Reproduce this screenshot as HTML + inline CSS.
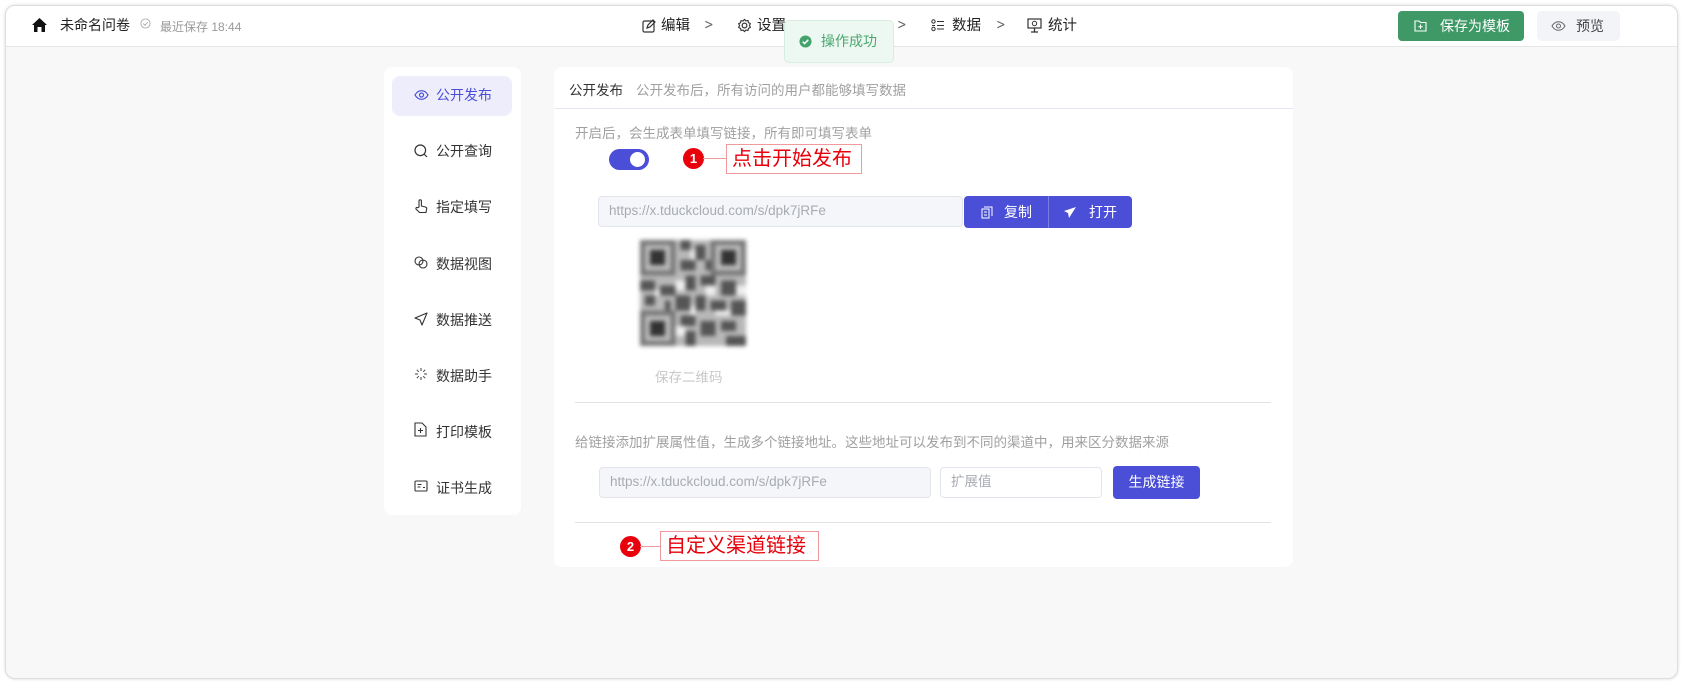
<!DOCTYPE html>
<html><head><meta charset="utf-8"><style>
*{box-sizing:border-box;margin:0;padding:0}
body{width:1683px;height:684px;background:#fff;font-family:"Liberation Sans","Noto Sans CJK SC",sans-serif;position:relative;overflow:hidden;color:#333}
.a{position:absolute}
#frame{left:5px;top:5px;width:1673px;height:674px;border:1px solid #dedede;border-radius:10px;background:#f8f8f8;overflow:hidden;box-shadow:0 0 3px rgba(0,0,0,.15)}
#hdr{left:0;top:0;width:100%;height:41px;background:#fff;border-bottom:1px solid #e6e6e6}
.t14{font-size:14px;line-height:16px}
.nav{font-size:14.5px;color:#222;line-height:16px;top:12px}
.chev{font-size:14px;color:#666;top:11px;font-family:"DejaVu Sans",sans-serif;transform:scaleX(.8)}
.card{background:#fff;border-radius:8px}
.item{font-size:14px;color:#333;line-height:16px}
.gray{color:#a0a0a0;font-size:13.5px;line-height:16px}
.inp{background:#f5f6fa;border:1px solid #e3e5ec;border-radius:4px;color:#a8abb3;font-size:13.5px;padding-left:10px;line-height:28px}
.red{color:#e8000b;font-size:20px;border:1px solid #f19a9e;background:#fff;line-height:28px;padding-left:5px}
.num{background:#e8000b;color:#fff;border-radius:50%;width:21px;height:21px;text-align:center;font-size:13px;font-weight:bold;line-height:21px}
</style></head><body>
<div id="frame" class="a">
<div id="hdr" class="a">
 <svg class="a" style="left:25px;top:11px" width="17" height="16" viewBox="0 0 17 16"><path d="M8.5 1 L16 8 L14 8 L14 15 L10.5 15 L10.5 10 L6.5 10 L6.5 15 L3 15 L3 8 L1 8 Z" fill="#111"/></svg>
 <div class="a t14" style="left:54px;top:11px;color:#222">未命名问卷</div>
 <svg class="a" style="left:134px;top:12px" width="11" height="11" viewBox="0 0 12 12"><circle cx="6" cy="6" r="5" fill="none" stroke="#aaa"/><path d="M3.5 6l2 2 3-3.5" fill="none" stroke="#aaa"/></svg>
 <div class="a" style="left:154px;top:12px;font-size:12px;color:#999">最近保存 18:44</div>
 <svg class="a" style="left:636px;top:13px" width="14" height="14" viewBox="0 0 14 14"><rect x="1" y="2" width="11" height="11" rx="1.5" fill="none" stroke="#333" stroke-width="1.2"/><path d="M5 9l1-3 5-5 2 2-5 5z" fill="none" stroke="#333" stroke-width="1.2"/></svg>
 <div class="a nav" style="left:655px">编辑</div><div class="a chev" style="left:697px">&gt;</div>
 <svg class="a" style="left:731px;top:12px" width="15" height="15" viewBox="0 0 16 16"><circle cx="8" cy="8" r="2.5" fill="none" stroke="#333" stroke-width="1.3"/><path d="M8 1.5l1.5 1.6 2.2-.4.5 2.2 2 1-.9 2.1.9 2.1-2 1-.5 2.2-2.2-.4L8 14.5 6.5 12.9l-2.2.4-.5-2.2-2-1 .9-2.1L1.8 6l2-1 .5-2.2 2.2.4z" fill="none" stroke="#333" stroke-width="1.2"/></svg>
 <div class="a nav" style="left:751px">设置</div>
 <div class="a chev" style="left:890px">&gt;</div>
 <svg class="a" style="left:925px;top:13px" width="14" height="13" viewBox="0 0 14 13"><circle cx="2.5" cy="2.5" r="1.7" fill="none" stroke="#333"/><circle cx="2.5" cy="10" r="1.7" fill="none" stroke="#333"/><path d="M6 2.5h7M6 6.5h7M6 10h7M1 6.5h3" stroke="#333" stroke-width="1.1"/></svg>
 <div class="a nav" style="left:946px">数据</div><div class="a chev" style="left:989px">&gt;</div>
 <svg class="a" style="left:1021px;top:12px" width="15" height="15" viewBox="0 0 15 15"><rect x="1" y="1" width="13" height="9" fill="none" stroke="#333" stroke-width="1.2"/><circle cx="7.5" cy="5.5" r="2.2" fill="none" stroke="#333"/><path d="M7.5 10v4M4 14h7" stroke="#333" stroke-width="1.3"/></svg>
 <div class="a nav" style="left:1042px">统计</div>
 <div class="a" style="left:1392px;top:5px;width:126px;height:30px;background:#3f9967;border-radius:4px;color:#fff;font-size:14px;line-height:30px">
  <svg class="a" style="left:16px;top:9px" width="13" height="12" viewBox="0 0 13 12"><path d="M1 1h4l1.5 1.5H12V11H1z" fill="none" stroke="#fff" stroke-width="1.1"/><path d="M6.5 4.5v4.5M4.3 6.8h4.4" stroke="#fff"/></svg>
  <span class="a" style="left:42px">保存为模板</span></div>
 <div class="a" style="left:1531px;top:5px;width:83px;height:30px;background:#f3f4f8;border-radius:5px;color:#444;font-size:14px;line-height:30px">
  <svg class="a" style="left:14px;top:10px" width="15" height="10" viewBox="0 0 15 10"><path d="M1 5C3 1.5 5 .7 7.5.7S12 1.5 14 5C12 8.5 10 9.3 7.5 9.3S3 8.5 1 5z" fill="none" stroke="#666"/><circle cx="7.5" cy="5" r="2" fill="none" stroke="#666"/></svg>
  <span class="a" style="left:39px">预览</span></div>
</div>
<div class="a" style="left:778px;top:14px;width:110px;height:43px;background:#eef8f2;border:1px solid #d6eedf;border-radius:5px;color:#4aa86f;font-size:14px;line-height:41px">
 <svg class="a" style="left:14px;top:14px" width="13" height="13" viewBox="0 0 14 14"><circle cx="7" cy="7" r="6.5" fill="#43a36a"/><path d="M4 7.2l2 2 4-4" fill="none" stroke="#fff" stroke-width="1.6"/></svg>
 <span class="a" style="left:36px">操作成功</span></div>

<!-- sidebar -->
<div class="a card" style="left:378px;top:61px;width:137px;height:448px"></div>
<div class="a" style="left:386px;top:70px;width:120px;height:40px;background:#ededfc;border-radius:8px"></div>
<svg class="a" style="left:408px;top:84px" width="15" height="10" viewBox="0 0 15 10"><path d="M1 5C3 1.5 5 .7 7.5.7S12 1.5 14 5C12 8.5 10 9.3 7.5 9.3S3 8.5 1 5z" fill="none" stroke="#4b4fd6" stroke-width="1.2"/><circle cx="7.5" cy="5" r="2" fill="none" stroke="#4b4fd6" stroke-width="1.2"/></svg>
<div class="a item" style="left:430px;top:81px;color:#4b4fd6">公开发布</div>
<svg class="a" style="left:408px;top:138px" width="14" height="14" viewBox="0 0 14 14"><circle cx="6.3" cy="6.3" r="5.3" fill="none" stroke="#333" stroke-width="1.2"/><path d="M10 10l3 3" stroke="#333" stroke-width="1.2"/></svg>
<div class="a item" style="left:430px;top:137px">公开查询</div>
<svg class="a" style="left:408px;top:193px" width="14" height="15" viewBox="0 0 14 15"><path d="M5 8V2a1.2 1.2 0 0 1 2.4 0v5l4 1c1 .3 1.5 1 1.3 2l-.7 3.5H5.5L2 10c-.5-.8.5-2 1.5-1.3z" fill="none" stroke="#333" stroke-width="1.1"/></svg>
<div class="a item" style="left:430px;top:193px">指定填写</div>
<svg class="a" style="left:408px;top:250px" width="14" height="13" viewBox="0 0 14 13"><circle cx="5" cy="5" r="4" fill="none" stroke="#333" stroke-width="1.1"/><circle cx="9" cy="8" r="4" fill="none" stroke="#333" stroke-width="1.1"/></svg>
<div class="a item" style="left:430px;top:250px">数据视图</div>
<svg class="a" style="left:408px;top:306px" width="14" height="14" viewBox="0 0 14 14"><path d="M13 1L1 6l5 2 2 5z" fill="none" stroke="#333" stroke-width="1.1" stroke-linejoin="round"/></svg>
<div class="a item" style="left:430px;top:306px">数据推送</div>
<svg class="a" style="left:408px;top:361px" width="14" height="14" viewBox="0 0 14 14"><path d="M7 1v3M7 10v3M1 7h3M10 7h3M2.8 2.8l2 2M9.2 9.2l2 2M11.2 2.8l-2 2M4.8 9.2l-2 2" stroke="#444" stroke-width="1"/></svg>
<div class="a item" style="left:430px;top:362px">数据助手</div>
<svg class="a" style="left:408px;top:416px" width="13" height="15" viewBox="0 0 13 15"><path d="M1 1h7l4 4v9H1z" fill="none" stroke="#333" stroke-width="1.1"/><path d="M6.5 6v5M4 8.5h5" stroke="#333" stroke-width="1.1"/></svg>
<div class="a item" style="left:430px;top:418px">打印模板</div>
<svg class="a" style="left:408px;top:474px" width="14" height="12" viewBox="0 0 14 12"><rect x="1" y="1" width="12" height="10" rx="1" fill="none" stroke="#333" stroke-width="1.1"/><path d="M3.5 4.5h4M3.5 7h3M9 7.5h2" stroke="#333"/></svg>
<div class="a item" style="left:430px;top:474px">证书生成</div>

<!-- main card -->
<div class="a card" style="left:548px;top:61px;width:739px;height:500px"></div>
<div class="a" style="left:548px;top:102px;width:739px;height:1px;background:#e8e8f2"></div>
<div class="a t14" style="left:563px;top:77px;color:#333;font-size:13.5px">公开发布</div>
<div class="a gray" style="left:630px;top:77px">公开发布后，所有访问的用户都能够填写数据</div>
<div class="a gray" style="left:569px;top:120px">开启后，会生成表单填写链接，所有即可填写表单</div>
<div class="a" style="left:603px;top:143px;width:40px;height:21px;background:#4b4fd8;border-radius:11px"><div class="a" style="left:21px;top:3px;width:15px;height:15px;background:#fff;border-radius:50%"></div></div>
<div class="a num" style="left:677px;top:142px">1</div>
<div class="a" style="left:697px;top:152px;width:24px;height:1px;background:#f19a9e"></div>
<div class="a red" style="left:720px;top:138px;width:136px;height:30px">点击开始发布</div>
<div class="a inp" style="left:592px;top:190px;width:365px;height:31px">https://x.tduckcloud.com/s/dpk7jRFe</div>
<div class="a" style="left:958px;top:190px;width:168px;height:32px;background:#4b4fd8;border-radius:4px;color:#fff;font-size:14px;line-height:32px">
 <svg class="a" style="left:17px;top:10px" width="12" height="13" viewBox="0 0 12 13"><path d="M3 1h8v9M1 3h7v9H1z M3 6h3M3 9h3" fill="none" stroke="#fff" stroke-width="1"/></svg>
 <span class="a" style="left:40px">复制</span>
 <div class="a" style="left:84px;top:0;width:1px;height:32px;background:#7b7fe4"></div>
 <svg class="a" style="left:100px;top:11px" width="12" height="11" viewBox="0 0 12 11"><path d="M12 0L0 4l4 2 1 5z" fill="#fff"/></svg>
 <span class="a" style="left:125px">打开</span></div>
<svg class="a" style="left:634px;top:232px;filter:blur(2.2px)" width="106" height="110" viewBox="0 0 21 21" shape-rendering="crispEdges">
 <rect x="0" y="0" width="21" height="21" fill="#b8b8b8"/>
 <g fill="#555">
 <rect x="0" y="0" width="7" height="7" fill="#777"/><rect x="1" y="1" width="5" height="5" fill="#bbb"/><rect x="2" y="2" width="3" height="3" fill="#333"/>
 <rect x="14" y="0" width="7" height="7" fill="#777"/><rect x="15" y="1" width="5" height="5" fill="#bbb"/><rect x="16" y="2" width="3" height="3" fill="#333"/>
 <rect x="0" y="14" width="7" height="7" fill="#777"/><rect x="1" y="15" width="5" height="5" fill="#bbb"/><rect x="2" y="16" width="3" height="3" fill="#333"/>
 <rect x="8" y="0" width="2" height="2"/><rect x="11" y="1" width="2" height="3"/><rect x="8" y="4" width="3" height="2"/><rect x="9" y="7" width="2" height="3"/>
 <rect x="0" y="8" width="3" height="2"/><rect x="4" y="9" width="3" height="2"/><rect x="12" y="7" width="3" height="2"/><rect x="16" y="8" width="3" height="3"/>
 <rect x="7" y="11" width="3" height="3"/><rect x="11" y="11" width="2" height="3"/><rect x="14" y="12" width="3" height="2"/><rect x="18" y="12" width="3" height="3"/>
 <rect x="1" y="11" width="2" height="2"/><rect x="5" y="12" width="1" height="2"/><rect x="8" y="15" width="3" height="2"/><rect x="12" y="16" width="3" height="3"/>
 <rect x="16" y="16" width="3" height="2"/><rect x="9" y="18" width="2" height="3"/><rect x="17" y="19" width="4" height="2"/><rect x="13" y="4" width="1" height="2"/>
 </g>
 <g fill="#eee"><rect x="10" y="2" width="1" height="2"/><rect x="7" y="8" width="2" height="2"/><rect x="13" y="9" width="2" height="2"/><rect x="3" y="10" width="1" height="1"/><rect x="10" y="13" width="1" height="2"/><rect x="15" y="14" width="3" height="1"/><rect x="7" y="17" width="2" height="2"/><rect x="19" y="9" width="2" height="2"/></g>
</svg>
<div class="a" style="left:649px;top:360px;font-size:13.5px;color:#c8c8c8">保存二维码</div>
<div class="a" style="left:569px;top:396px;width:696px;height:1px;background:#e2e2e8"></div>
<div class="a gray" style="left:569px;top:429px">给链接添加扩展属性值，生成多个链接地址。这些地址可以发布到不同的渠道中，用来区分数据来源</div>
<div class="a inp" style="left:593px;top:461px;width:332px;height:31px">https://x.tduckcloud.com/s/dpk7jRFe</div>
<div class="a inp" style="left:934px;top:461px;width:162px;height:31px;background:#fff">扩展值</div>
<div class="a" style="left:1107px;top:460px;width:87px;height:33px;background:#4b4fd8;border-radius:4px;color:#fff;font-size:14px;line-height:33px;text-align:center">生成链接</div>
<div class="a" style="left:569px;top:516px;width:696px;height:1px;background:#e2e2e8"></div>
<div class="a num" style="left:614px;top:530px">2</div>
<div class="a" style="left:634px;top:540px;width:21px;height:1px;background:#f19a9e"></div>
<div class="a red" style="left:654px;top:525px;width:159px;height:30px">自定义渠道链接</div>
</div>
</body></html>
